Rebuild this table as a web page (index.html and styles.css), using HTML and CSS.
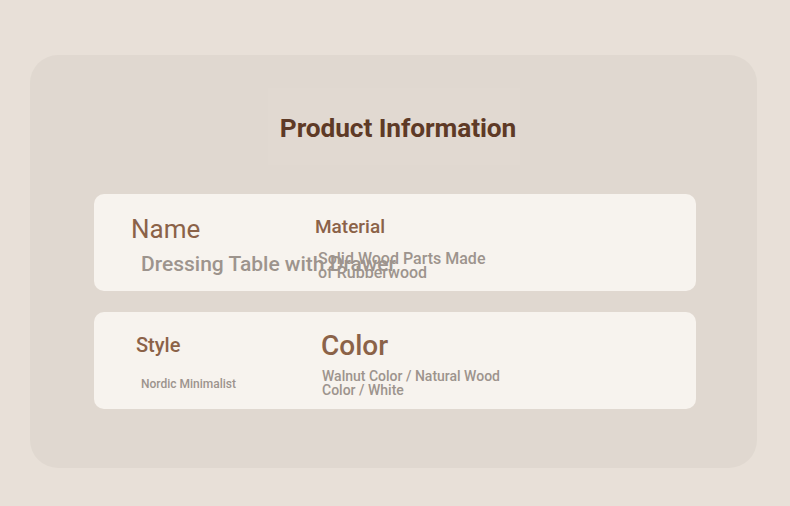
FILE: index.html
```html
<!DOCTYPE html>
<html>
<head>
<meta charset="utf-8">
<link rel="stylesheet" href="styles.css">
</head>
<body>
<div class="panel">
  <div class="title-wrap"><h1 class="title">Product Information</h1></div>
  <div class="card">
    <div class="col col-a">
      <div class="lbl name-lbl">Name</div>
      <div class="val name-val">Dressing Table with Drawer</div>
    </div>
    <div class="col col-b">
      <div class="lbl mat-lbl">Material</div>
      <div class="val mat-val">Solid Wood Parts Made of Rubberwood</div>
    </div>
  </div>
  <div class="card">
    <div class="col col-a">
      <div class="lbl style-lbl">Style</div>
      <div class="val style-val">Nordic Minimalist</div>
    </div>
    <div class="col col-b">
      <div class="lbl color-lbl">Color</div>
      <div class="val color-val">Walnut Color / Natural Wood Color / White</div>
    </div>
  </div>
</div>
</body>
</html>
```
FILE: styles.css
```css
* { box-sizing: border-box; }
html, body { margin: 0; padding: 0; }
body {
  background: #e8e0d8;
  font-family: Roboto, "Liberation Sans", sans-serif;
  width: 790px;
  height: 506px;
  overflow: hidden;
  padding: 55px 33px 0 30px;
}
.panel {
  background: #e0d8d0;
  border-radius: 28px;
  height: 413px;
  padding: 33px 61px 0 64px;
  display: flex;
  flex-direction: column;
}
.title-wrap {
  align-self: center;
  background: #e1d9d1;
  padding: 22px 4px 19px 12px;
  margin-bottom: 29px;
  margin-right: 2px;
}
.title {
  margin: 0;
  font-size: 26.3px;
  font-weight: 700;
  color: #5e3a26;
  line-height: 36px;
  letter-spacing: -0.1px;
}
.card {
  background: #f7f3ee;
  border-radius: 10px;
  height: 97px;
  margin-bottom: 21px;
  display: flex;
  padding-left: 34px;
}
.col { display: flex; flex-direction: column; }
.col-a { width: 184px; }
.lbl { color: #8b6248; font-weight: 400; }
.val { color: #9d948d; }
.name-lbl { font-size: 26px; line-height: 30px; margin-top: 20px; margin-left: 3px; }
.name-val { font-size: 21px; line-height: 24px; margin-top: 8px; margin-left: 13px; white-space: nowrap; font-weight: 500; }
.mat-lbl { font-size: 19px; line-height: 22px; margin-top: 22px; margin-left: 3px; font-weight: 500; }
.mat-val { font-size: 16px; line-height: 14px; margin-top: 14px; margin-left: 6px; width: 174px; font-weight: 500; }
.style-lbl { font-size: 20px; line-height: 24px; margin-top: 21px; margin-left: 8px; font-weight: 500; }
.style-val { font-size: 12px; line-height: 14px; margin-top: 20px; margin-left: 13px; font-weight: 500; }
.color-lbl { font-size: 28px; line-height: 32px; margin-top: 18px; margin-left: 9px; font-weight: 500; }
.color-val { font-size: 14px; line-height: 14px; margin-top: 7px; margin-left: 10px; width: 190px; font-weight: 500; }
```
